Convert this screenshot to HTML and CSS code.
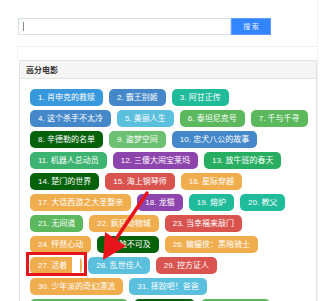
FILE: index.html
```html
<!DOCTYPE html>
<html lang="zh">
<head>
<meta charset="utf-8">
<link rel="stylesheet" href="styles.css">
</head>
<body>
<div class="page">
  <form class="search">
    <div class="search-input"><span class="caret"></span></div>
    <button type="button" class="search-btn">搜 索</button>
  </form>
  <div class="divider"></div>
  <div class="panel">
    <div class="panel-heading">高分电影</div>
    <div class="panel-body">
      <div class="tag-row">
        <span class="tag c-blue">1. 肖申克的救赎</span>
        <span class="tag c-steel">2. 霸王别姬</span>
        <span class="tag c-teal">3. 阿甘正传</span>
      </div>
      <div class="tag-row">
        <span class="tag c-steel">4. 这个杀手不太冷</span>
        <span class="tag c-sky">5. 美丽人生</span>
        <span class="tag c-green">6. 泰坦尼克号</span>
        <span class="tag c-green">7. 千与千寻</span>
      </div>
      <div class="tag-row">
        <span class="tag c-dark">8. 辛德勒的名单</span>
        <span class="tag c-lgreen">9. 盗梦空间</span>
        <span class="tag c-steel">10. 忠犬八公的故事</span>
      </div>
      <div class="tag-row">
        <span class="tag c-sea">11. 机器人总动员</span>
        <span class="tag c-purple">12. 三傻大闹宝莱坞</span>
        <span class="tag c-emerald">13. 放牛班的春天</span>
      </div>
      <div class="tag-row">
        <span class="tag c-dark">14. 楚门的世界</span>
        <span class="tag c-red">15. 海上钢琴师</span>
        <span class="tag c-orange">16. 星际穿越</span>
      </div>
      <div class="tag-row">
        <span class="tag c-orange">17. 大话西游之大圣娶亲</span>
        <span class="tag c-purple">18. 龙猫</span>
        <span class="tag c-teal">19. 熔炉</span>
        <span class="tag c-teal">20. 教父</span>
      </div>
      <div class="tag-row">
        <span class="tag c-green">21. 无间道</span>
        <span class="tag c-orange">22. 疯狂动物城</span>
        <span class="tag c-red">23. 当幸福来敲门</span>
      </div>
      <div class="tag-row">
        <span class="tag c-orange">24. 怦然心动</span>
        <span class="tag c-dark">25. 触不可及</span>
        <span class="tag c-orange">26. 蝙蝠侠：黑暗骑士</span>
      </div>
      <div class="tag-row">
        <span class="tag c-orange marked">27. 活着<span class="sel"></span><span class="mark-box"></span></span>
        <span class="tag c-sky">28. 乱世佳人</span>
        <span class="tag c-red">29. 控方证人</span>
      </div>
      <div class="tag-row">
        <span class="tag c-orange">30. 少年派的奇幻漂流</span>
        <span class="tag c-sky">31. 摔跤吧！爸爸</span>
      </div>
      <div class="tag-row">
        <span class="tag c-green">32. 指环王3：王者无敌</span>
        <span class="tag c-dark">33. 天空之城</span>
        <span class="tag c-green">34. 飞屋环游记</span>
      </div>
    </div>
  </div>
</div>
<svg class="arrow" width="329" height="301" viewBox="0 0 329 301">
  <line x1="147" y1="193" x2="114" y2="242" stroke="#e8141c" stroke-width="3.5" stroke-linecap="round"/>
  <polygon points="103,260 105,232 126,246" fill="#e8141c"/>
</svg>
</body>
</html>
```
FILE: styles.css
```css
html, body {
  margin: 0;
  padding: 0;
  background: #fff;
}
body {
  width: 329px;
  height: 301px;
  overflow: hidden;
  position: relative;
  font-family: "Liberation Sans", "Noto Sans CJK SC", sans-serif;
}
.page {
  width: 300px;
  margin-left: 17px;
  padding-top: 18px;
  border-right: 1px solid #f2f2f2;
  min-height: 400px;
}
.search {
  display: flex;
  margin: 0 0 0 1px;
}
.search-input {
  box-sizing: border-box;
  width: 213px;
  height: 17px;
  border: 1px solid #d5e1ec;
  display: flex;
  align-items: center;
  padding-left: 4px;
}
.caret {
  width: 1px;
  height: 9px;
  background: #888;
}
.search-btn {
  box-sizing: border-box;
  width: 40px;
  height: 17px;
  margin: 0;
  padding: 0;
  border: 1px solid #5c9dff;
  background: #3385ff;
  color: #e8f0ff;
  font-family: "Noto Sans CJK SC", sans-serif;
  font-size: 7px;
  line-height: 15px;
}
.divider {
  margin-top: 11px;
  height: 13px;
  border-top: 1px solid #f0f0f0;
  border-left: 1px solid #f3f3f3;
}
.panel {
  margin-left: 2px;
  width: 298px;
  box-sizing: border-box;
  border: 1px solid #e2e2e2;
  border-radius: 2px;
}
.panel-heading {
  height: 17px;
  line-height: 17px;
  background: #f5f5f5;
  border-bottom: 1px solid #e2e2e2;
  padding-left: 6px;
  font-family: "Noto Sans CJK SC", sans-serif;
  font-size: 8px;
  font-weight: bold;
  color: #333;
}
.panel-body {
  padding: 10px 10px;
}
.tag-row {
  display: flex;
  gap: 6px;
  margin-bottom: 4px;
}
.tag {
  display: inline-block;
  height: 17px;
  line-height: 17px;
  padding: 0 8px;
  border-radius: 5px;
  color: #fff;
  font-size: 8px;
  white-space: nowrap;
}
.c-blue { background: #3798dc; }
.c-steel { background: #4488c9; }
.c-teal { background: #1fbb9b; }
.c-sky { background: #5bc0de; }
.c-green { background: #5cb85c; }
.c-lgreen { background: #6cc071; }
.c-dark { background: #05620b; }
.c-sea { background: #3cb371; }
.c-purple { background: #8e44ad; }
.c-emerald { background: #27ae60; }
.c-red { background: #d9534f; }
.c-orange { background: #f0ad4e; }
.marked {
  position: relative;
  padding-right: 2px;
}
.sel {
  display: inline-block;
  width: 8px;
  height: 17px;
  margin-left: 5px;
  vertical-align: top;
  background: #fff;
}
.mark-box {
  position: absolute;
  left: -4px;
  top: -5px;
  width: 61px;
  height: 24px;
  box-sizing: border-box;
  border: 3px solid #e8141c;
}
.arrow {
  position: absolute;
  left: 0;
  top: 0;
  pointer-events: none;
}
```
